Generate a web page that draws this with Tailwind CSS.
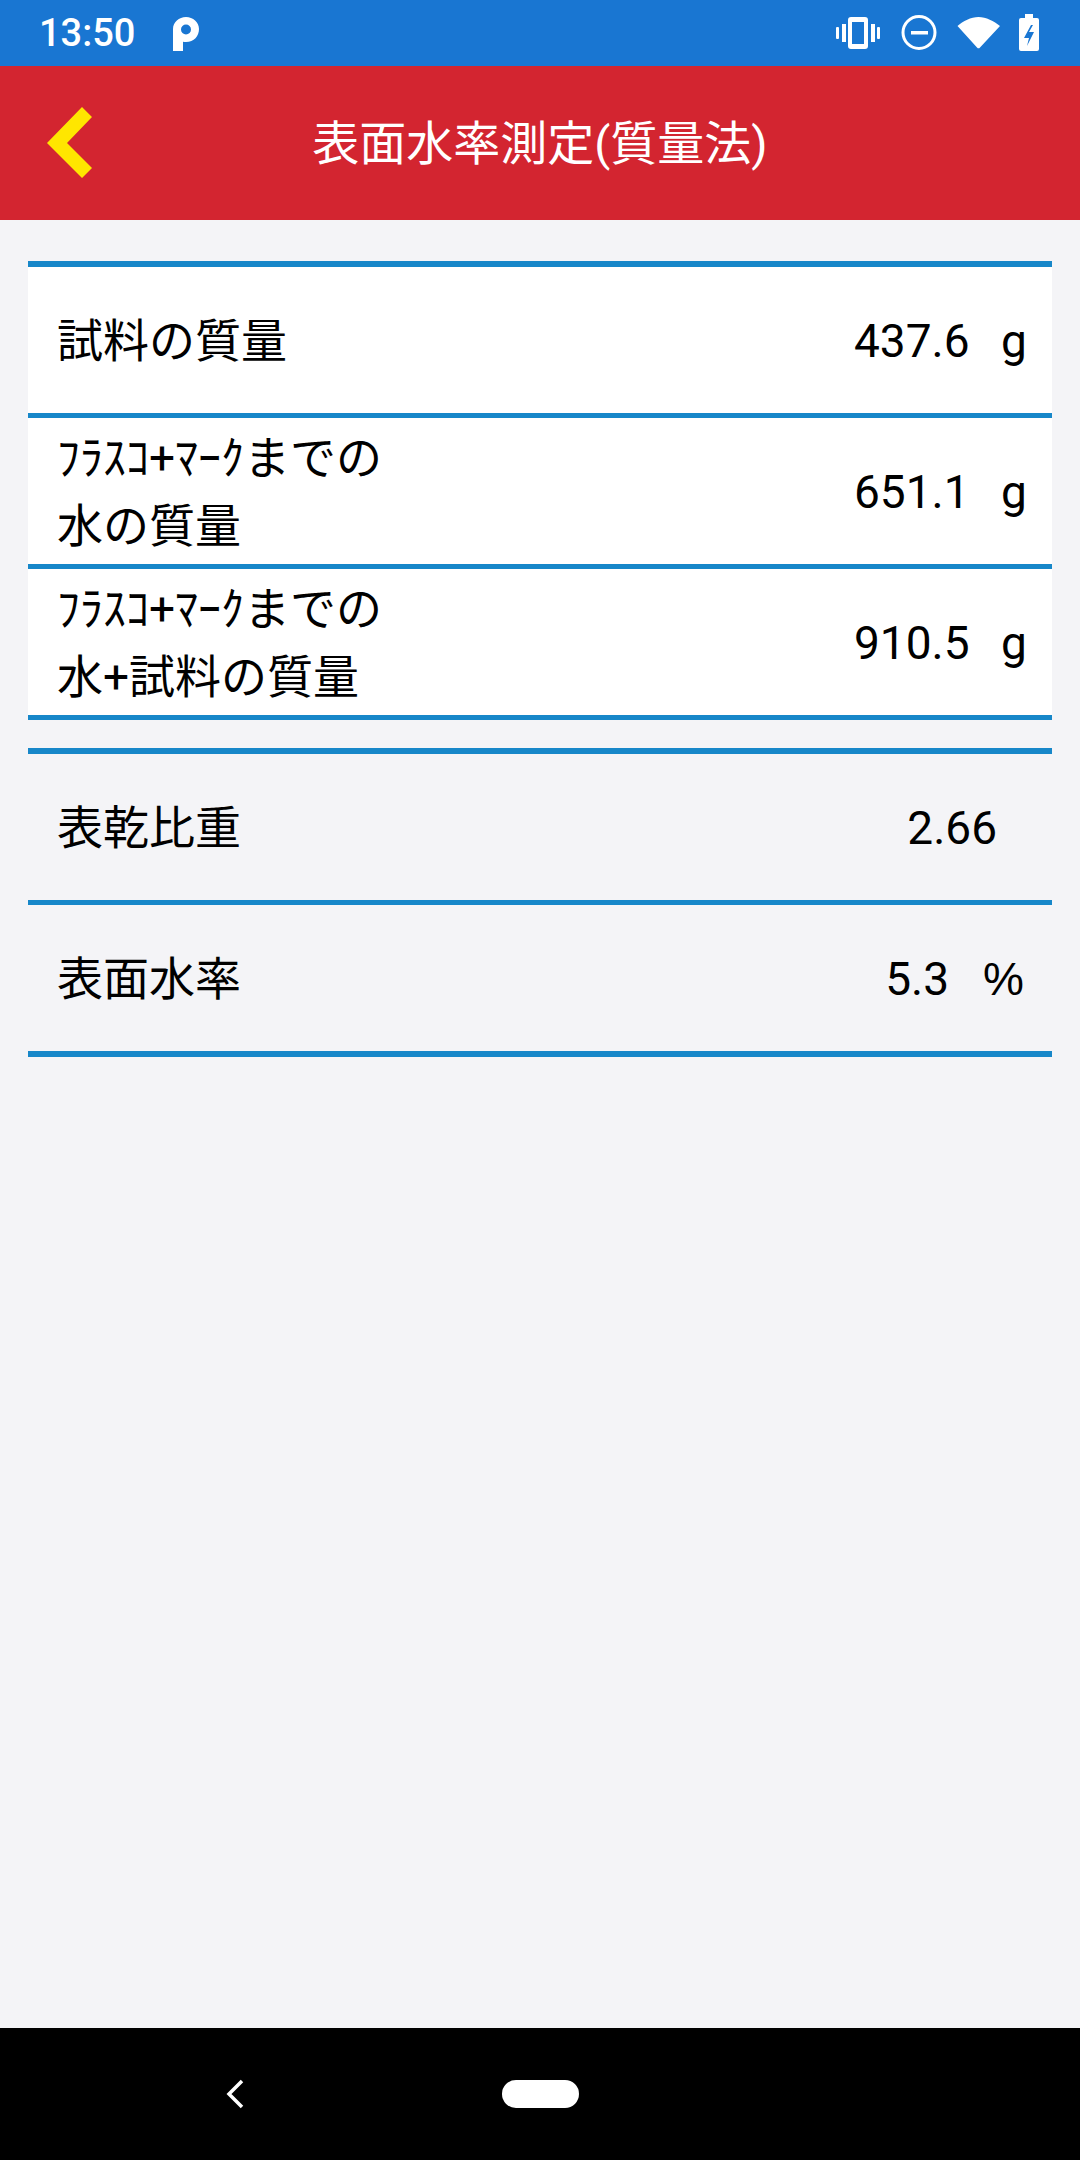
<!DOCTYPE html>
<html lang="ja">
<head>
  <meta charset="UTF-8" />
  <meta name="viewport" content="width=device-width, initial-scale=1.0"/>
  <title>表面水率測定(質量法)</title>
  <script src="https://cdn.jsdelivr.net/npm/@tailwindcss/browser@4"></script>
</head>
<body class="w-[1080px] h-[2160px] flex flex-col bg-[#f4f4f7] text-black font-['Roboto','Noto_Sans_CJK_JP',sans-serif] overflow-hidden">

  <!-- status bar -->
  <div class="h-[66px] bg-[#1976d2] flex items-center text-white shrink-0">
    <span class="ml-[39px] text-[38px] font-medium w-[134px] leading-none">13:50</span>
    <svg class="w-[26px] h-[34px] mt-[2px]" viewBox="0 0 26 34">
      <path fill="#fff" fill-rule="evenodd" d="M0 34V12C0 5 6 0 13 0s13 5 13 12-5 13-13 13c-1 0-2 0-3-.3V34zM13 7.500a5 5 0 1 0 0 10 5 5 0 0 0 0-10z"/>
    </svg>
    <svg class="ml-auto w-[280px] h-[66px]" viewBox="800 0 280 66">
      <g fill="#fff">
        <rect x="836" y="27" width="3" height="12" rx="1"/>
        <rect x="842" y="24" width="4" height="18"/>
        <rect x="871" y="24" width="4" height="18"/>
        <rect x="877" y="27" width="3" height="12" rx="1"/>
        <path fill-rule="evenodd" d="M851 17h14a3 3 0 0 1 3 3v26a3 3 0 0 1-3 3h-14a3 3 0 0 1-3-3V20a3 3 0 0 1 3-3zm1 5v22h12V22z"/>
        <path d="M957.500 26C963 21 971 17 978.500 17S994 21 1000 26L980 47.500a2 2 0 0 1-3 0z"/>
        <path fill-rule="evenodd" d="M1025 14v4h-4a2 2 0 0 0-2 2v29a2 2 0 0 0 2 2h16a2 2 0 0 0 2-2V20a2 2 0 0 0-2-2h-4v-4zm6 11-7 13h5l-2 8 7-14h-5l4-7z"/>
      </g>
      <circle cx="919" cy="32.500" r="16" fill="none" stroke="#fff" stroke-width="3"/>
      <rect x="911" y="31" width="17" height="3.500" fill="#fff"/>
    </svg>
  </div>

  <!-- header -->
  <div class="h-[154px] bg-[#d32530] flex items-center relative shrink-0">
    <svg class="w-[46px] h-[72px] ml-[47px]" viewBox="47 107 46 72">
      <polygon fill="#ffe600" points="47,143 82,107 92,117 67,143 92,168 82,178"/>
    </svg>
    <h1 class="absolute inset-x-0 text-center text-[47px] font-normal text-white leading-none">表面水率測定(質量法)</h1>
  </div>

  <div class="px-[28px] pt-[41px] flex-1">
    <!-- input group -->
    <div class="bg-white border-t-[6px] border-b-[5px] border-[#1787c9] divide-y-[5px] divide-[#1787c9]">
      <div class="h-[151px] flex items-center pt-[2px] pl-[29px] pr-[26px] text-[46px]">
        <span>試料の質量</span>
        <span class="ml-auto w-[147px]">437.6</span>
        <span class="w-[25px]">g</span>
      </div>
      <div class="h-[151px] flex items-center pt-[2px] pl-[29px] pr-[26px] text-[46px] leading-[68px]">
        <span>ﾌﾗｽｺ+ﾏｰｸまでの<br>水の質量</span>
        <span class="ml-auto w-[147px]">651.1</span>
        <span class="w-[25px]">g</span>
      </div>
      <div class="h-[146px] flex items-center pt-[2px] pl-[29px] pr-[26px] text-[46px] leading-[68px]">
        <span>ﾌﾗｽｺ+ﾏｰｸまでの<br>水+試料の質量</span>
        <span class="ml-auto w-[147px]">910.5</span>
        <span class="w-[25px]">g</span>
      </div>
    </div>

    <!-- result group -->
    <div class="mt-[28px] border-y-[6px] border-[#1787c9] divide-y-[5px] divide-[#1787c9]">
      <div class="h-[151px] flex items-center pt-[2px] pl-[29px] text-[46px]">
        <span>表乾比重</span>
        <span class="ml-auto mr-[55px]">2.66</span>
      </div>
      <div class="h-[146px] flex items-center pt-[3px] pl-[29px] pr-[28px] text-[46px]">
        <span>表面水率</span>
        <span class="ml-auto">5.3</span>
        <span class="ml-[34px] w-[41px] font-['Liberation_Sans']">%</span>
      </div>
    </div>
  </div>

  <!-- nav bar -->
  <div class="h-[132px] bg-black flex items-center shrink-0">
    <svg class="w-[18px] h-[30px] ml-[226px]" viewBox="0 0 18 30">
      <path d="M16 2 3 15l13 13" fill="none" stroke="#fff" stroke-width="3.500"/>
    </svg>
    <div class="ml-[258px] w-[77px] h-[28px] rounded-full bg-white"></div>
  </div>
</body>
</html>
